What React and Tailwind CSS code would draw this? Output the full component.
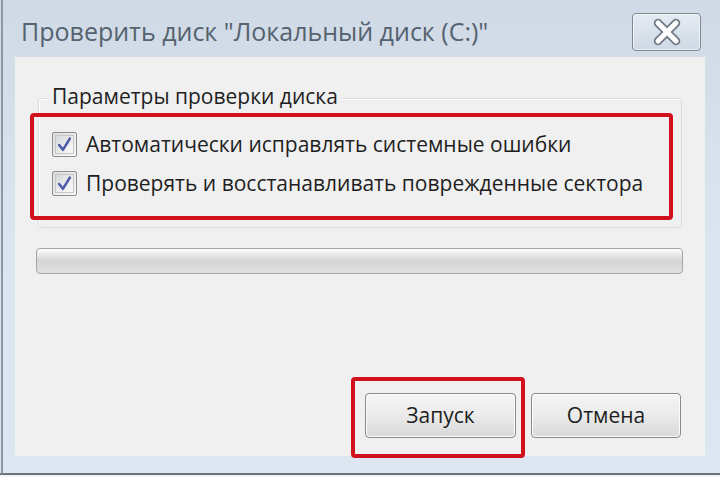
import React from "react";

const FONT = { fontFamily: '"Open Sans", "Noto Sans", "Liberation Sans", sans-serif' };

function Check() {
  return (
    <span className="flex h-[25px] w-[25px] shrink-0 items-center justify-center rounded-[2px] border border-[#8e8f8f] bg-gradient-to-br from-[#dcdcdc] to-[#f8f8f8] p-[2px]">
      <span className="flex h-full w-full items-center justify-center border border-[#c4c6c8] bg-gradient-to-br from-[#d6d8db] to-[#fbfbfb]">
        <svg width="17" height="17" viewBox="0 0 16 16">
          <path d="M3 8.5 L6.5 13 L13 2.5" fill="none" stroke="#4c5aa8" strokeWidth="2.4" strokeLinecap="round" strokeLinejoin="round" />
        </svg>
      </span>
    </span>
  );
}

function CloseIcon() {
  return (
    <svg width="36" height="28" viewBox="0 0 36 28">
      <path d="M9 5 L27 23 M27 5 L9 23" stroke="#6f7a86" strokeWidth="8.5" strokeLinecap="round" />
      <path d="M9 5 L27 23 M27 5 L9 23" stroke="#ffffff" strokeWidth="5" strokeLinecap="round" />
    </svg>
  );
}

export default function App() {
  return (
    <div
      className="relative flex h-[477px] w-[720px] flex-col overflow-hidden bg-gradient-to-b from-[#cfdae6] via-[#dbe5ef] to-[#dde7f1]"
      style={FONT}
    >
      {/* рамка слева */}
      <div className="absolute left-[1px] top-0 h-[474px] w-[2px] bg-[#8d97a1]" />

      {/* заголовок */}
      <div className="flex h-[57px] shrink-0 items-start justify-between pl-[21px] pr-[19px]">
        <span className="mt-[15px] text-[25px] leading-[32px] text-[#55626f]">
          Проверить диск "Локальный диск (C:)"
        </span>
        <button
          type="button"
          className="mt-[13px] flex h-[38px] w-[69px] items-center justify-center rounded-[4px] border border-[#7d8894] bg-gradient-to-b from-[#e4ebf2] to-[#cfd9e4] shadow-[inset_0_0_0_1px_rgba(255,255,255,0.6)]"
        >
          <CloseIcon />
        </button>
      </div>

      {/* содержимое */}
      <div className="relative mx-[15px] flex h-[399px] shrink-0 flex-col bg-[#f0f0f0]">
        {/* группа */}
        <div className="relative ml-[23px] mt-[41px] h-[130px] w-[644px] rounded-[3px] border border-[#d5dfe5] shadow-[inset_1px_1px_0_#ffffff]">
          <span className="absolute left-[9px] top-[-17px] bg-[#f0f0f0] px-[4px] text-[21px] leading-[28px] text-[#1e1e1e]">
            Параметры проверки диска
          </span>
          <div className="ml-[13px] mt-[33px] flex flex-col gap-[14px]">
            <div className="flex items-center gap-[9px]">
              <Check />
              <span className="text-[21px] leading-[25px] text-[#1e1e1e]">
                Автоматически исправлять системные ошибки
              </span>
            </div>
            <div className="flex items-center gap-[9px]">
              <Check />
              <span className="text-[21px] leading-[25px] text-[#1e1e1e]">
                Проверять и восстанавливать поврежденные сектора
              </span>
            </div>
          </div>
        </div>

        {/* прогресс */}
        <div className="ml-[21px] mt-[20px] h-[26px] w-[647px] rounded-[4px] border border-[#a5a5a5] bg-gradient-to-b from-[#fdfdfd] via-[#d4d4d4] to-[#e0e0e0] shadow-[inset_0_1px_0_#ffffff]" />

        {/* кнопки */}
        <div className="mt-[119px] flex gap-[15px] pl-[350px]">
          <button
            type="button"
            className="flex h-[45px] w-[151px] items-center justify-center rounded-[4px] border border-[#8a8a8a] bg-gradient-to-b from-[#f4f4f4] via-[#ebebeb] to-[#d9d9d9] text-[21px] text-[#1e1e1e] shadow-[inset_0_0_0_1px_#fcfcfc]"
          >
            Запуск
          </button>
          <button
            type="button"
            className="flex h-[45px] w-[150px] items-center justify-center rounded-[4px] border border-[#8a8a8a] bg-gradient-to-b from-[#f4f4f4] via-[#ebebeb] to-[#d9d9d9] text-[21px] text-[#1e1e1e] shadow-[inset_0_0_0_1px_#fcfcfc]"
          >
            Отмена
          </button>
        </div>

        {/* красные выделения */}
        <div className="pointer-events-none absolute left-[15px] top-[56px] h-[107px] w-[643px] rounded-[4px] border-[4px] border-[#d0101c]" />
        <div className="pointer-events-none absolute left-[336px] top-[320px] h-[81px] w-[174px] rounded-[4px] border-[4px] border-[#d0101c]" />
      </div>

      {/* нижняя кромка */}
      <div className="mt-auto h-[2px] w-full bg-[#6b7278]" />
      <div className="h-[2px] w-full bg-[#f4f4f4]" />
    </div>
  );
}
